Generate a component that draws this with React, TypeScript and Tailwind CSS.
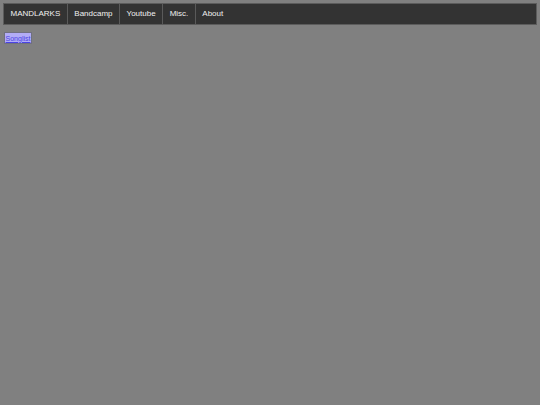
export default function App() {
  const links = ['MANDLARKS', 'Bandcamp', 'Youtube', 'Misc.', 'About'];

  return (
    <div className="min-h-screen w-full bg-[#808080] p-[3px] font-['Liberation_Sans',Arial,sans-serif]">
      {/* top navigation */}
      <nav className="flex h-[22px] border border-[#5c5c5c] bg-[#333333]">
        {links.map((label, i) => (
          <a
            key={label}
            className={`flex items-center px-[6.5px] text-[8px] leading-none text-[#f0f0f0] ${
              i < links.length - 1 ? 'border-r border-[#5a5a5a]' : ''
            }`}
          >
            {label}
          </a>
        ))}
      </nav>

      <div className="mt-[7px] ml-[1px] flex">
        <button className="flex h-[12px] w-[28px] items-center justify-center border border-[#707080] bg-[#b2acf6] text-[7px] leading-none text-[#4a44e4] underline">
          Songlist
        </button>
      </div>
    </div>
  );
}
